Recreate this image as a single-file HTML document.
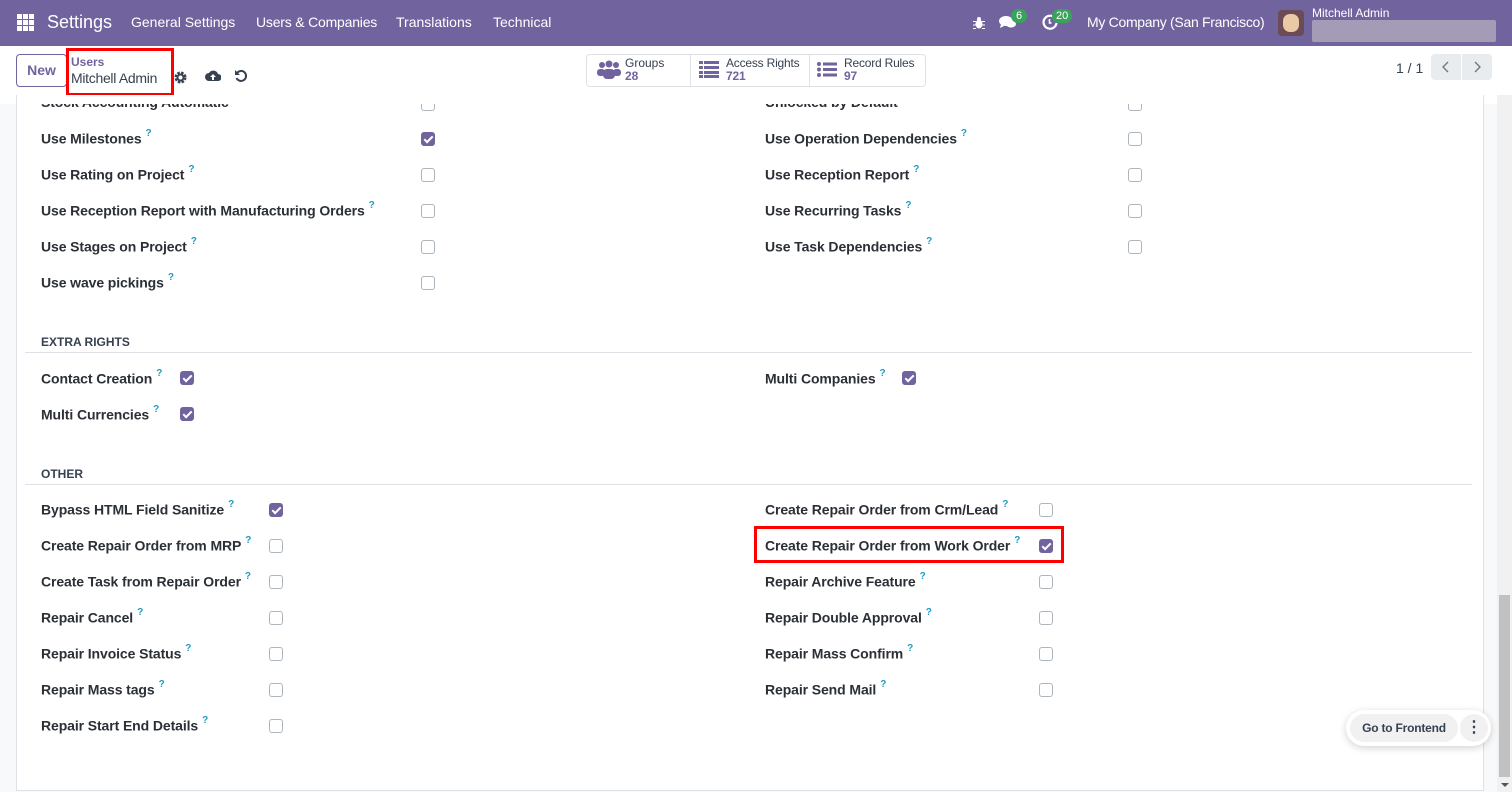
<!DOCTYPE html>
<html><head><meta charset="utf-8"><style>
*{box-sizing:border-box;margin:0;padding:0}
body{width:1512px;height:792px;overflow:hidden;font-family:"Liberation Sans",sans-serif;background:#f8f9fa;position:relative;color:#212529}
.nav{position:absolute;left:0;top:0;width:1512px;height:46px;background:#71639e;color:#fff}
.nav span{position:absolute;top:14px;font-size:14px}
.cp{position:absolute;left:0;top:46px;width:1512px;height:58px;background:#fff;border-bottom:1px solid #dee2e6;z-index:2}
.sheet{position:absolute;left:16px;top:95px;width:1468px;height:696px;background:#fff;border:1px solid #dee2e6;border-top:none}
.lbl{position:absolute;font-size:14px;color:#2b2f36;font-weight:600;letter-spacing:-0.1px}
.lbl sup{color:#1f9bc2;font-size:10px;font-weight:600;margin-left:4px;position:relative;top:-2px}
.cb{position:absolute;width:14px;height:14px;border:1px solid #adb5bd;border-radius:3px;background:#fff}
.cb.on{background:#71639e;border-color:#71639e}
.cb.on:after{content:"";position:absolute;left:4px;top:1px;width:3px;height:7px;border:solid #fff;border-width:0 2px 2px 0;transform:rotate(45deg)}
.sec{position:absolute;left:41px;font-size:12px;font-weight:700;color:#374151}
.hr{position:absolute;left:25px;width:1447px;height:1px;background:#dee2e6}
.btn{position:absolute;border:1px solid #dee2e6;border-radius:4px}
</style></head><body>
<div class="nav">
 <svg style="position:absolute;left:17px;top:14px" width="17" height="17"><g fill="#fff"><rect x="0" y="0" width="5" height="5"/><rect x="6" y="0" width="5" height="5"/><rect x="12" y="0" width="5" height="5"/><rect x="0" y="6" width="5" height="5"/><rect x="6" y="6" width="5" height="5"/><rect x="12" y="6" width="5" height="5"/><rect x="0" y="12" width="5" height="5"/><rect x="6" y="12" width="5" height="5"/><rect x="12" y="12" width="5" height="5"/></g></svg>
 <span style="left:47px;top:12px;font-size:18px">Settings</span>
 <span style="left:131px">General Settings</span>
 <span style="left:256px;letter-spacing:-0.2px">Users &amp; Companies</span>
 <span style="left:396px">Translations</span>
 <span style="left:493px">Technical</span>
 <svg style="position:absolute;left:973px;top:16px" width="12" height="13"><g fill="#fff"><ellipse cx="6" cy="8" rx="3.5" ry="4.5"/><circle cx="6" cy="3" r="2"/><path d="M0 5h3v1H0zM9 5h3v1H9zM0 8.5h3v1H0zM9 8.5h3v1H9zM0 12h3v1H0zM9 12h3v1H9z"/></g></svg>
 <svg style="position:absolute;left:999px;top:15px" width="18" height="14"><g fill="#fff"><ellipse cx="7" cy="6" rx="7" ry="5"/><path d="M2 9l-1 4 4-2z"/><ellipse cx="12" cy="9" rx="5" ry="3.5"/></g></svg>
 <div style="position:absolute;left:1011px;top:9px;background:#3aa35b;border-radius:8px;font-size:11px;padding:1px 5px;color:#fff">6</div>
 <svg style="position:absolute;left:1042px;top:14px" width="16" height="16"><path d="M13 4A6.5 6.5 0 1 0 14.5 9" fill="none" stroke="#fff" stroke-width="2.2"/><path d="M7.5 5v4h2" fill="none" stroke="#fff" stroke-width="1.6"/></svg>
 <div style="position:absolute;left:1052px;top:9px;background:#3aa35b;border-radius:8px;font-size:11px;padding:1px 4px;color:#fff">20</div>
 <span style="left:1087px;letter-spacing:-0.3px">My Company (San Francisco)</span>
 <div style="position:absolute;left:1278px;top:10px;width:26px;height:26px;border-radius:4px;background:#6b4b55"><div style="margin:4px 5px;width:16px;height:18px;border-radius:7px;background:#e9c9a6"></div></div>
 <span style="left:1312px;top:6px;font-size:12px">Mitchell Admin</span>
 <div style="position:absolute;left:1312px;top:20px;width:184px;height:22px;background:#a49bb6;border-radius:2px"></div>
</div>
<div class="cp">
 <div class="btn" style="left:16px;top:8px;width:51px;height:33px;border-color:#71639e;color:#71639e;font-size:14px;font-weight:600;text-align:center;line-height:31px">New</div>
 <div style="position:absolute;left:66px;top:2px;width:108px;height:48px;border:3px solid #f00"></div>
 <div style="position:absolute;left:71px;top:9px;font-size:12px;color:#71639e;font-weight:600">Users</div>
 <div style="position:absolute;left:71px;top:24px;font-size:14px;color:#374151;letter-spacing:-0.3px">Mitchell Admin</div>
 <svg style="position:absolute;left:174px;top:25px" width="13" height="13"><circle cx="6.5" cy="6.5" r="4.5" fill="none" stroke="#374151" stroke-width="3" stroke-dasharray="2.4 1.2"/><circle cx="6.5" cy="6.5" r="3" fill="none" stroke="#374151" stroke-width="2"/></svg>
 <svg style="position:absolute;left:205px;top:24px" width="16" height="12"><path d="M4 11a4 4 0 0 1 0-8 5 5 0 0 1 9 1 3.5 3.5 0 0 1 0 7z" fill="#374151"/><path d="M8 4l-3 3h2v3h2V7h2z" fill="#fff"/></svg>
 <svg style="position:absolute;left:234px;top:23px" width="14" height="14"><path d="M3 4A5 5 0 1 1 2.5 9" fill="none" stroke="#374151" stroke-width="2"/><path d="M1 1v5h5z" fill="#374151"/></svg>
 <div class="btn" style="left:586px;top:8px;width:340px;height:33px"></div>
 <div style="position:absolute;left:690px;top:8px;width:1px;height:33px;background:#dee2e6"></div>
 <div style="position:absolute;left:809px;top:8px;width:1px;height:33px;background:#dee2e6"></div>
 <svg style="position:absolute;left:597px;top:14px" width="24" height="20"><g fill="#71639e"><circle cx="5" cy="5" r="3"/><circle cx="12" cy="4" r="3.5"/><circle cx="19" cy="5" r="3"/><rect x="0" y="9" width="8" height="7" rx="3"/><rect x="16" y="9" width="8" height="7" rx="3"/><rect x="6" y="9" width="12" height="10" rx="4"/></g></svg>
 <div style="position:absolute;left:625px;top:11px;font-size:12px;color:#374151;line-height:13px">Groups<br><b style="color:#71639e">28</b></div>
 <svg style="position:absolute;left:699px;top:15px" width="20" height="17"><g fill="#71639e"><rect x="0" y="0" width="4" height="3"/><rect x="5" y="0" width="15" height="3"/><rect x="0" y="5" width="4" height="3"/><rect x="5" y="5" width="15" height="3"/><rect x="0" y="10" width="4" height="3"/><rect x="5" y="10" width="15" height="3"/><rect x="0" y="14" width="4" height="3"/><rect x="5" y="14" width="15" height="3"/></g></svg>
 <div style="position:absolute;left:726px;top:11px;font-size:12px;color:#374151;line-height:13px;letter-spacing:-0.2px">Access Rights<br><b style="color:#71639e">721</b></div>
 <svg style="position:absolute;left:817px;top:16px" width="20" height="15"><g fill="#71639e"><circle cx="2" cy="2" r="2"/><rect x="6" y="0.5" width="14" height="3"/><circle cx="2" cy="7.5" r="2"/><rect x="6" y="6" width="14" height="3"/><circle cx="2" cy="13" r="2"/><rect x="6" y="11.5" width="14" height="3"/></g></svg>
 <div style="position:absolute;left:844px;top:11px;font-size:12px;color:#374151;line-height:13px;letter-spacing:-0.2px">Record Rules<br><b style="color:#71639e">97</b></div>
 <div style="position:absolute;left:1396px;top:14px;font-size:14px;color:#374151">1 / 1</div>
 <div style="position:absolute;left:1431px;top:8px;width:30px;height:26px;background:#e9ecef;border-radius:4px 0 0 4px"><svg width="30" height="26"><path d="M17 8l-5 5 5 5" fill="none" stroke="#6b7280" stroke-width="1.3"/></svg></div>
 <div style="position:absolute;left:1462px;top:8px;width:30px;height:26px;background:#e9ecef;border-radius:0 4px 4px 0"><svg width="30" height="26"><path d="M13 8l5 5-5 5" fill="none" stroke="#6b7280" stroke-width="1.3"/></svg></div>
 <div style="position:absolute;left:0;top:49px;width:1497px;height:9px;background:#fff"></div>
 <div style="position:absolute;left:16px;top:49px;width:1px;height:9px;background:#dee2e6"></div>
 <div style="position:absolute;left:1483px;top:49px;width:1px;height:9px;background:#dee2e6"></div>
 <div style="position:absolute;left:1497px;top:49px;width:15px;height:9px;background:#f1f1f1"></div>
</div>
<div class="sheet" style="top:96px;height:695px"></div>

<div class="lbl" style="left:41px;top:94px">Stock Accounting Automatic</div><div class="cb" style="left:421px;top:97px"></div>
<div class="lbl" style="left:765px;top:94px">Unlocked by Default</div><div class="cb" style="left:1128px;top:97px"></div>

<div class="lbl" style="left:41px;top:130px">Use Milestones<sup>?</sup></div><div class="cb on" style="left:421px;top:132px"></div>
<div class="lbl" style="left:41px;top:166px">Use Rating on Project<sup>?</sup></div><div class="cb" style="left:421px;top:168px"></div>
<div class="lbl" style="left:41px;top:202px">Use Reception Report with Manufacturing Orders<sup>?</sup></div><div class="cb" style="left:421px;top:204px"></div>
<div class="lbl" style="left:41px;top:238px">Use Stages on Project<sup>?</sup></div><div class="cb" style="left:421px;top:240px"></div>
<div class="lbl" style="left:41px;top:274px">Use wave pickings<sup>?</sup></div><div class="cb" style="left:421px;top:276px"></div>
<div class="lbl" style="left:765px;top:130px">Use Operation Dependencies<sup>?</sup></div><div class="cb" style="left:1128px;top:132px"></div>
<div class="lbl" style="left:765px;top:166px">Use Reception Report<sup>?</sup></div><div class="cb" style="left:1128px;top:168px"></div>
<div class="lbl" style="left:765px;top:202px">Use Recurring Tasks<sup>?</sup></div><div class="cb" style="left:1128px;top:204px"></div>
<div class="lbl" style="left:765px;top:238px">Use Task Dependencies<sup>?</sup></div><div class="cb" style="left:1128px;top:240px"></div>

<div class="sec" style="top:335px">EXTRA RIGHTS</div><div class="hr" style="top:352px"></div>
<div class="lbl" style="left:41px;top:370px">Contact Creation<sup>?</sup></div><div class="cb on" style="left:180px;top:371px"></div>
<div class="lbl" style="left:41px;top:406px">Multi Currencies<sup>?</sup></div><div class="cb on" style="left:180px;top:407px"></div>
<div class="lbl" style="left:765px;top:370px">Multi Companies<sup>?</sup></div><div class="cb on" style="left:902px;top:371px"></div>

<div class="sec" style="top:467px">OTHER</div><div class="hr" style="top:484px"></div>
<div class="lbl" style="left:41px;top:501px">Bypass HTML Field Sanitize<sup>?</sup></div><div class="cb on" style="left:269px;top:503px"></div>
<div class="lbl" style="left:41px;top:537px">Create Repair Order from MRP<sup>?</sup></div><div class="cb" style="left:269px;top:539px"></div>
<div class="lbl" style="left:41px;top:573px">Create Task from Repair Order<sup>?</sup></div><div class="cb" style="left:269px;top:575px"></div>
<div class="lbl" style="left:41px;top:609px">Repair Cancel<sup>?</sup></div><div class="cb" style="left:269px;top:611px"></div>
<div class="lbl" style="left:41px;top:645px">Repair Invoice Status<sup>?</sup></div><div class="cb" style="left:269px;top:647px"></div>
<div class="lbl" style="left:41px;top:681px">Repair Mass tags<sup>?</sup></div><div class="cb" style="left:269px;top:683px"></div>
<div class="lbl" style="left:41px;top:717px">Repair Start End Details<sup>?</sup></div><div class="cb" style="left:269px;top:719px"></div>
<div class="lbl" style="left:765px;top:501px">Create Repair Order from Crm/Lead<sup>?</sup></div><div class="cb" style="left:1039px;top:503px"></div>
<div class="lbl" style="left:765px;top:537px">Create Repair Order from Work Order<sup>?</sup></div><div class="cb on" style="left:1039px;top:539px"></div>
<div style="position:absolute;left:754px;top:526px;width:310px;height:37px;border:3px solid #f00"></div>
<div class="lbl" style="left:765px;top:573px">Repair Archive Feature<sup>?</sup></div><div class="cb" style="left:1039px;top:575px"></div>
<div class="lbl" style="left:765px;top:609px">Repair Double Approval<sup>?</sup></div><div class="cb" style="left:1039px;top:611px"></div>
<div class="lbl" style="left:765px;top:645px">Repair Mass Confirm<sup>?</sup></div><div class="cb" style="left:1039px;top:647px"></div>
<div class="lbl" style="left:765px;top:681px">Repair Send Mail<sup>?</sup></div><div class="cb" style="left:1039px;top:683px"></div>

<div style="position:absolute;left:1346px;top:710px;width:145px;height:36px;background:#fff;border-radius:18px;box-shadow:0 2px 8px rgba(0,0,0,.18)"></div>
<div style="position:absolute;left:1350px;top:714px;width:108px;height:28px;background:#f1f1f1;border-radius:14px;font-size:12px;font-weight:700;color:#374151;text-align:center;line-height:28px;letter-spacing:-0.2px">Go to Frontend</div>
<div style="position:absolute;left:1460px;top:714px;width:28px;height:28px;background:#f1f1f1;border-radius:14px;text-align:center;line-height:28px;font-weight:700;color:#374151">⋮</div>

<div style="position:absolute;left:1497px;top:95px;width:15px;height:697px;background:#f1f1f1;z-index:3"></div>
<div style="position:absolute;left:1499px;top:595px;width:11px;height:182px;background:#c1c1c1;z-index:3"></div>
<div style="position:absolute;left:1501px;top:783px;width:0;height:0;border:4px solid transparent;border-top-color:#555;border-bottom:none;z-index:3"></div>
</body></html>
